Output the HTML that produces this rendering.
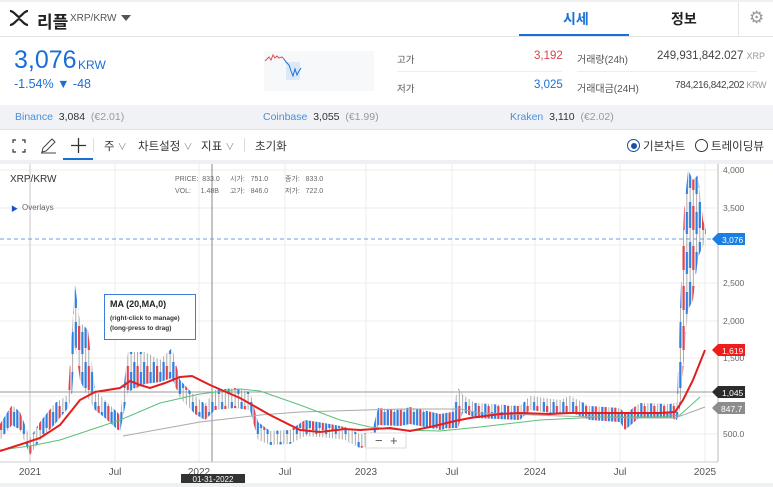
<!DOCTYPE html><html><head><meta charset="utf-8"><style>
*{margin:0;padding:0;box-sizing:border-box}
body{width:773px;height:487px;overflow:hidden;background:#fff;font-family:"Liberation Sans","Noto Sans CJK KR",sans-serif;color:#333;position:relative}
.a{position:absolute;white-space:nowrap}
</style></head><body>
<div class="a" style="left:0;top:0;width:773px;height:2px;background:#eef0f3"></div>
<svg class="a" style="left:9px;top:10px" width="20" height="16" viewBox="0 0 20 16"><path d="M1 1 C5 1 7 6 10 7 C13 6 15 1 19 1 M1 15 C5 15 7 10 10 9 C13 10 15 15 19 15" stroke="#222" stroke-width="2.2" fill="none"/></svg>
<div class="a" style="left:37px;top:8px;font-size:17px;font-weight:bold;color:#222">리플</div>
<div class="a" style="left:70px;top:13px;font-size:10px;color:#555">XRP/KRW</div>
<div class="a" style="left:121px;top:15px;width:0;height:0;border-left:5px solid transparent;border-right:5px solid transparent;border-top:6px solid #555"></div>
<div class="a" style="left:563px;top:9px;font-size:14px;font-weight:bold;color:#1a6fd6">시세</div>
<div class="a" style="left:519px;top:34px;width:110px;height:3px;background:#1a6fd6"></div>
<div class="a" style="left:671px;top:9px;font-size:14px;font-weight:bold;color:#222">정보</div>
<div class="a" style="left:738px;top:2px;width:1px;height:34px;background:#e5e5e5"></div>
<div class="a" style="left:749px;top:8px;font-size:17px;color:#999">⚙</div>
<div class="a" style="left:0;top:36px;width:773px;height:1px;background:#e3e3e3"></div>
<div class="a" style="left:14px;top:46px;font-size:25px;color:#1a6fd6">3,076</div>
<div class="a" style="left:78px;top:58px;font-size:12px;color:#1a6fd6">KRW</div>
<div class="a" style="left:14px;top:77px;font-size:12.5px;color:#1a6fd6">-1.54% ▼ -48</div>
<svg class="a" style="left:264px;top:51px" width="110" height="40"><rect width="110" height="40" fill="#f7f8fa"/><rect x="22" y="11" width="14" height="18" fill="#dde9f8"/><path d="M1 10 L3 8 L5 6 L7 9 L9 4 L11 7 L13 5 L15 7 L18 6 L20 8" stroke="#d9534f" fill="none" stroke-width="1"/><path d="M20 8 L22 11 L25 14 L27 20 L29 25 L31 18 L33 24 L35 20 L37 17" stroke="#1a6fd6" fill="none" stroke-width="1"/></svg>
<div class="a" style="left:397px;top:52px;font-size:9.5px;color:#555">고가</div>
<div class="a" style="left:534px;top:50px;font-size:11.5px;color:#d9434a">3,192</div>
<div class="a" style="left:397px;top:71px;width:165px;height:1px;background:#eee"></div>
<div class="a" style="left:397px;top:81px;font-size:9.5px;color:#555">저가</div>
<div class="a" style="left:534px;top:79px;font-size:11.5px;color:#1a6fd6">3,025</div>
<div class="a" style="left:577px;top:51px;font-size:10px;color:#555">거래량(24h)</div>
<div class="a" style="left:657px;top:50px;font-size:11.5px;color:#444">249,931,842.027 <span style="font-size:9px;color:#999">XRP</span></div>
<div class="a" style="left:577px;top:71px;width:180px;height:1px;background:#eee"></div>
<div class="a" style="left:577px;top:80px;font-size:10px;color:#555">거래대금(24H)</div>
<div class="a" style="left:675px;top:80px;font-size:10px;color:#444;letter-spacing:-.4px">784,216,842,202 <span style="font-size:9px;color:#999">KRW</span></div>
<div class="a" style="left:0;top:105px;width:773px;height:25px;background:#f0f2f5;border-bottom:1px solid #e3e3e3"></div>
<div class="a" style="left:15px;top:111px;font-size:10.5px"><span style="color:#4a8fd9">Binance</span>&nbsp;&nbsp;<span>3,084</span>&nbsp;&nbsp;<span style="color:#999">(€2.01)</span></div>
<div class="a" style="left:263px;top:111px;font-size:10.5px"><span style="color:#4a8fd9">Coinbase</span>&nbsp;&nbsp;<span>3,055</span>&nbsp;&nbsp;<span style="color:#999">(€1.99)</span></div>
<div class="a" style="left:510px;top:111px;font-size:10.5px"><span style="color:#4a8fd9">Kraken</span>&nbsp;&nbsp;<span>3,110</span>&nbsp;&nbsp;<span style="color:#999">(€2.02)</span></div>
<svg class="a" style="left:12px;top:139px" width="14" height="14"><path d="M1 4V1H4M10 1H13V4M13 10V13H10M4 13H1V10" stroke="#333" fill="none" stroke-width="1.2"/></svg>
<svg class="a" style="left:40px;top:138px" width="17" height="16"><path d="M2 14 L3 10 L12 1 L15 4 L6 13 Z M1 15H16" stroke="#444" fill="none" stroke-width="1"/></svg>
<div class="a" style="left:63px;top:130px;width:30px;height:30px;border-bottom:2px solid #1a6fd6"></div>
<svg class="a" style="left:71px;top:138px" width="15" height="15"><path d="M7.5 0V15M0 7.5H15" stroke="#333" stroke-width="1.3"/></svg>
<div class="a" style="left:93px;top:138px;width:1px;height:14px;background:#ddd"></div>
<div class="a" style="left:104px;top:138px;font-size:11.5px;color:#333">주 <span style="color:#888;font-size:9px">∨</span></div>
<div class="a" style="left:138px;top:138px;font-size:11.5px;color:#333">차트설정 <span style="color:#888;font-size:9px">∨</span></div>
<div class="a" style="left:201px;top:138px;font-size:11.5px;color:#333">지표 <span style="color:#888;font-size:9px">∨</span></div>
<div class="a" style="left:244px;top:138px;width:1px;height:14px;background:#ddd"></div>
<div class="a" style="left:255px;top:138px;font-size:11.5px;color:#333">초기화</div>
<div class="a" style="left:627px;top:139px;width:13px;height:13px;border:1.5px solid #1a4fa0;border-radius:50%"></div>
<div class="a" style="left:630.5px;top:142.5px;width:6px;height:6px;background:#1a4fa0;border-radius:50%"></div>
<div class="a" style="left:643px;top:138px;font-size:11.5px;color:#333">기본차트</div>
<div class="a" style="left:695px;top:139px;width:13px;height:13px;border:1.5px solid #333;border-radius:50%"></div>
<div class="a" style="left:711px;top:138px;font-size:11.5px;color:#333">트레이딩뷰</div>
<div class="a" style="left:0;top:160px;width:773px;height:4px;background:#eef0f3"></div>
<svg class="a" style="left:0;top:164px" width="773" height="323" viewBox="0 164 773 323">
<defs>
<pattern id="cp" patternUnits="userSpaceOnUse" x="0" y="0" width="9.75" height="40">
<rect x="0" y="0" width="9.75" height="40" fill="#fff" fill-opacity="0"/>
<line x1="1.1" x2="1.1" y1="0" y2="40" stroke="#888" stroke-width="0.7"/>
<rect x="0" y="6" width="2.2" height="24" fill="#e0454f"/>
<line x1="4.35" x2="4.35" y1="0" y2="40" stroke="#888" stroke-width="0.7"/>
<rect x="3.25" y="12" width="2.2" height="22" fill="#2f7fe0"/>
<line x1="7.6" x2="7.6" y1="0" y2="40" stroke="#888" stroke-width="0.7"/>
<rect x="6.5" y="2" width="2.2" height="26" fill="#2f7fe0"/>
</pattern>
</defs>
<g stroke="#ececec" stroke-width="1">
<path d="M0 170H718M0 208H718M0 245H718M0 283H718M0 321H718M0 358H718M0 396H718M0 434H718"/>
<path d="M115 164V462M199 164V462M285 164V462M366 164V462M452 164V462M535 164V462M620 164V462M705 164V462"/>
</g>
<path d="M30 164V462" stroke="#c8c8c8"/>
<path d="M212 164V462" stroke="#888"/>
<path d="M0 239H718" stroke="#6a9fe0" stroke-dasharray="4 3"/>
<path d="M0 392H718" stroke="#999"/>
<polygon fill="url(#cp)" points="0,424 12,405 20,412 30,438 40,422 55,403 68,395 72,330 75,285 80,322 88,330 95,390 105,400 120,415 128,352 145,352 160,360 172,348 180,380 195,396 205,404 215,390 235,388 250,392 258,422 270,431 290,430 305,420 330,424 345,427 360,434 372,432 378,408 400,410 410,407 440,414 452,412 458,388 463,395 475,403 520,406 530,396 560,400 570,396 590,406 620,408 625,414 640,403 670,404 677,402 680,310 684,210 688,170 693,180 698,175 703,220 706,230 706,245 703,245 698,258 693,300 688,310 684,360 680,408 677,420 670,418 640,417 625,430 620,422 590,420 570,412 560,414 530,410 520,420 475,418 463,412 458,428 452,428 440,430 410,424 400,426 378,425 372,446 360,448 345,440 330,438 305,436 290,444 270,445 258,440 250,410 235,408 215,410 205,420 195,414 180,398 172,378 160,382 145,384 128,392 120,432 105,418 95,410 88,398 80,380 75,345 72,395 68,408 55,424 40,440 30,455 20,430 12,425 0,440"/>
<path d="M123 436 L200 422 L260 415 L300 412 L400 409 L460 409 L480 413 L560 416 L640 418 L675 418 L705 407" stroke="#aaa" fill="none" stroke-width="1"/>
<path d="M0 450 L30 446 L60 440 L90 430 L120 420 L160 403 L200 394 L240 389 L260 391 L300 405 L340 420 L370 427 L400 430 L440 431 L480 427 L540 420 L600 417 L660 417 L680 415 L700 397" stroke="#5cbf7a" fill="none" stroke-width="1"/>
<path d="M0 451 L25 443 L40 438 L60 425 L80 400 L95 392 L120 388 L130 381 L140 385 L150 388 L165 383 L180 377 L192 376 L210 385 L240 398 L270 415 L300 430 L320 432 L345 429 L360 430 L390 428 L410 431 L430 427 L455 421 L470 418 L500 414 L520 413 L550 414 L570 413 L620 413 L660 413 L675 412 L683 400 L693 380 L705 350" stroke="#e31e1e" fill="none" stroke-width="2"/>
<path d="M718 164V462" stroke="#bbb"/>
<path d="M0 462H718" stroke="#ccc"/>
<g font-size="8.5" fill="#666" font-family="Liberation Sans,sans-serif">
<text x="723" y="173">4,000</text><text x="723" y="211">3,500</text><text x="723" y="286">2,500</text><text x="723" y="324">2,000</text><text x="723" y="361">1,500</text><text x="723" y="437">500.0</text>
</g>
<g font-size="10" fill="#555" font-family="Liberation Sans,sans-serif" text-anchor="middle">
<text x="30" y="475">2021</text><text x="115" y="475">Jul</text><text x="199" y="475">2022</text><text x="285" y="475">Jul</text><text x="366" y="475">2023</text><text x="452" y="475">Jul</text><text x="535" y="475">2024</text><text x="620" y="475">Jul</text><text x="705" y="475">2025</text>
</g>
<rect x="181" y="474" width="64" height="10" fill="#333"/>
<text x="213" y="482" font-size="8" fill="#fff" text-anchor="middle" font-family="Liberation Sans,sans-serif">01-31-2022</text>
<path d="M712 239 L718 233 H745 V245 H718Z" fill="#1a7fe0"/><text x="722" y="243" font-size="8.5" fill="#fff" font-family="Liberation Sans,sans-serif">3,076</text>
<path d="M712 350 L718 344 H745 V356 H718Z" fill="#f01c1c"/><text x="722" y="354" font-size="8.5" fill="#fff" font-family="Liberation Sans,sans-serif">1,619</text>
<path d="M712 392 L718 386 H745 V398 H718Z" fill="#2b2b2b"/><text x="722" y="396" font-size="8.5" fill="#fff" font-family="Liberation Sans,sans-serif">1,045</text>
<path d="M712 408 L718 402 H745 V414 H718Z" fill="#8c8c8c"/><text x="721" y="412" font-size="8.5" fill="#fff" font-family="Liberation Sans,sans-serif">847.7</text>
<rect x="366" y="433" width="40" height="15" fill="#fff" stroke="#ddd"/><text x="375" y="445" font-size="13" fill="#555" font-family="Liberation Sans,sans-serif">−</text><text x="390" y="445" font-size="13" fill="#555" font-family="Liberation Sans,sans-serif">+</text>
</svg>
<div class="a" style="left:0;top:483px;width:773px;height:4px;background:#eef0f3"></div>
<div class="a" style="left:10px;top:174px;font-size:10px;color:#333">XRP/KRW</div>
<div class="a" style="left:11px;top:204px;font-size:7px;color:#1a4fd0">▶</div>
<div class="a" style="left:22px;top:203px;font-size:8px;color:#666">Overlays</div>
<div class="a" style="left:175px;top:174px;font-size:7px;color:#666;line-height:12px">PRICE:&nbsp; 833.0<br>VOL:&nbsp;&nbsp;&nbsp;&nbsp; 1.48B</div>
<div class="a" style="left:230px;top:174px;font-size:7px;color:#666;line-height:12px">시가:&nbsp;&nbsp; 751.0<br>고가:&nbsp;&nbsp; 846.0</div>
<div class="a" style="left:285px;top:174px;font-size:7px;color:#666;line-height:12px">종가:&nbsp;&nbsp; 833.0<br>저가:&nbsp;&nbsp; 722.0</div>
<div class="a" style="left:104px;top:294px;width:92px;height:46px;background:#fff;border:1.5px solid #3a7fd5;padding:4px 5px">
<div style="font-size:9px;font-weight:bold;color:#222">MA (20,MA,0)</div>
<div style="font-size:6.5px;font-weight:bold;color:#333;margin-top:5px;line-height:10px">(right-click to manage)<br>(long-press to drag)</div></div>
</body></html>
